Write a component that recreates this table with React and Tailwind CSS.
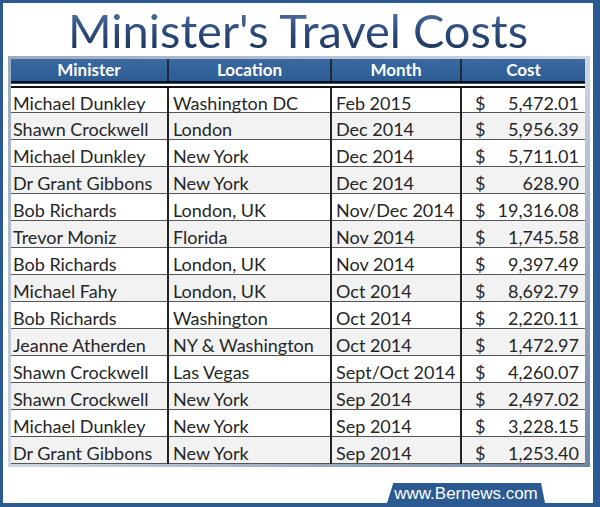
const rows = [
  ["Michael Dunkley", "Washington DC", "Feb 2015", "5,472.01"],
  ["Shawn Crockwell", "London", "Dec 2014", "5,956.39"],
  ["Michael Dunkley", "New York", "Dec 2014", "5,711.01"],
  ["Dr Grant Gibbons", "New York", "Dec 2014", "628.90"],
  ["Bob Richards", "London, UK", "Nov/Dec 2014", "19,316.08"],
  ["Trevor Moniz", "Florida", "Nov 2014", "1,745.58"],
  ["Bob Richards", "London, UK", "Nov 2014", "9,397.49"],
  ["Michael Fahy", "London, UK", "Oct 2014", "8,692.79"],
  ["Bob Richards", "Washington", "Oct 2014", "2,220.11"],
  ["Jeanne Atherden", "NY & Washington", "Oct 2014", "1,472.97"],
  ["Shawn Crockwell", "Las Vegas", "Sept/Oct 2014", "4,260.07"],
  ["Shawn Crockwell", "New York", "Sep 2014", "2,497.02"],
  ["Michael Dunkley", "New York", "Sep 2014", "3,228.15"],
  ["Dr Grant Gibbons", "New York", "Sep 2014", "1,253.40"],
]

const headers = ["Minister", "Location", "Month", "Cost"]

export default function App() {
  return (
    <div className="w-[600px] h-[507px] bg-[#2b5a93] pl-[3px] pt-[3px] pr-[7px] pb-[4px]">
      <div className="bg-white h-full flex flex-col font-['Lato','Open_Sans',sans-serif]">

        {/* Title */}
        <h1 className="h-[53px] flex items-center justify-center text-[47px] leading-none">
          <span className="bg-linear-to-b from-[#5a78a3] via-[#2d4d7e] to-[#1b3256] bg-clip-text text-transparent pt-[1px]">
            Minister's Travel Costs
          </span>
        </h1>

        {/* Table with shaded frame */}
        <div className="ml-[5px] w-[582px] p-[3px] bg-linear-to-br from-[#9aa9be] via-[#cfd7e2] to-[#6f84a2]">
          <table className="border-collapse table-fixed w-[574px] text-[18px] text-[#262626]">
            <colgroup>
              <col className="w-[157px]" />
              <col className="w-[163px]" />
              <col className="w-[130px]" />
              <col className="w-[124px]" />
            </colgroup>
            <thead>
              <tr className="bg-linear-to-b from-[#3a68a0] to-[#2c5a92] h-[25px]">
                {headers.map((h, i) => (
                  <th
                    key={h}
                    className={
                      "text-white font-bold text-[17px] leading-none p-0 " +
                      (i > 0 ? "border-l-2 border-[#1e2a3a]" : "")
                    }
                  >
                    {h}
                  </th>
                ))}
              </tr>
            </thead>
            <tbody className="border-t-[7px] border-double border-[#111]">
              {rows.map((r, idx) => (
                <tr
                  key={idx}
                  className={
                    "h-[27px] border-b border-[#555] " +
                    (idx % 2 === 0 ? "bg-white" : "bg-[#f2f2f2]")
                  }
                >
                  <td className="pl-[2px] pt-[6px] pb-0 align-middle leading-none whitespace-nowrap">{r[0]}</td>
                  <td className="pl-[4px] pt-[6px] pb-0 align-middle leading-none whitespace-nowrap border-l-2 border-[#222]">{r[1]}</td>
                  <td className="pl-[4px] pt-[6px] pb-0 align-middle leading-none whitespace-nowrap border-l-2 border-[#222]">{r[2]}</td>
                  <td className="pt-[6px] pb-0 px-0 align-middle leading-none border-l-2 border-[#222]">
                    <div className="flex justify-between pl-[13px] pr-[6px]">
                      <span>$</span>
                      <span>{r[3]}</span>
                    </div>
                  </td>
                </tr>
              ))}
            </tbody>
          </table>
        </div>

        {/* Footer tab */}
        <div className="flex-1 flex items-end justify-end pr-[48px]">
          <div className="bg-[#2b5a93] text-white font-['Liberation_Sans',Arial,sans-serif] text-[17px] leading-none h-[20px] w-[158px] flex items-center justify-center [clip-path:polygon(4%_0,97.5%_0,100%_100%,0_100%)]">
            www.Bernews.com
          </div>
        </div>
      </div>
    </div>
  )
}
